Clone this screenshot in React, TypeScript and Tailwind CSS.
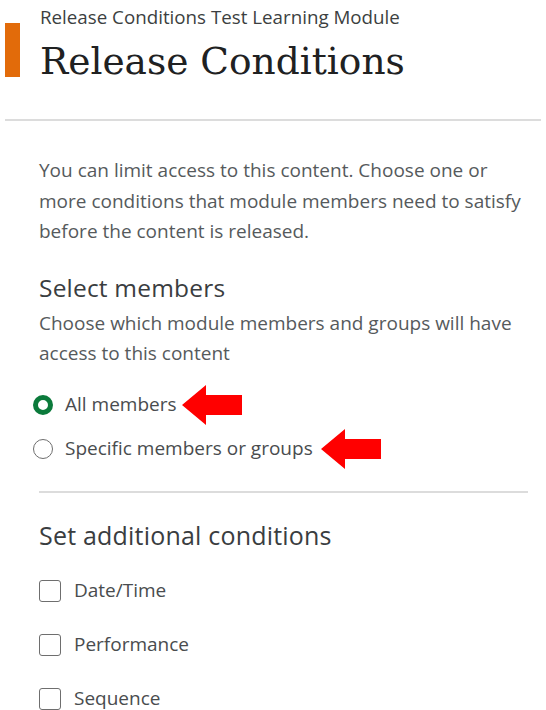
function Arrow() {
  return (
    <svg width="60" height="40" viewBox="0 0 60 40" className="shrink-0">
      <polygon points="0,20 24,0 24,10 60,10 60,30 24,30 24,40" fill="#ff0000" />
    </svg>
  );
}

function Checkbox({ label }: { label: string }) {
  return (
    <div className="flex items-center gap-[13px] h-[54px]">
      <span className="w-[22px] h-[22px] border-[1.5px] border-[#6e6e6e] rounded-[3px] bg-white" />
      <span>{label}</span>
    </div>
  );
}

export default function App() {
  return (
    <div
      className="w-[546px] h-[710px] bg-white overflow-hidden text-[#494c4e]"
      style={{ fontFamily: '"Open Sans", sans-serif' }}
    >
      <div className="flex pt-[5px]">
        <div className="w-[15px] h-[54px] bg-[#e26b0a] ml-[5px] mt-[18px]" />
        <div className="ml-[20px]">
          <div className="text-[18.75px] leading-[24px] text-[#3c3f41]">
            Release Conditions Test Learning Module
          </div>
          <h1
            className="text-[37.5px] leading-[48px] text-[#202122] mt-[8px]"
            style={{ fontFamily: '"DejaVu Serif", serif' }}
          >
            Release Conditions
          </h1>
        </div>
      </div>

      <div className="mx-[5px] mt-[34px] h-[2px] bg-[#dcdcdc]" />

      <div className="pl-[39px] pr-[16px] pt-[34px] text-[19px]">
        <p className="leading-[30.5px] text-[#565a5c]">
          You can limit access to this content. Choose one or more conditions
          that module members need to satisfy before the content is released.
        </p>

        <h2 className="mt-[27px] text-[24.5px] leading-[28px] text-[#3a3d3f] font-medium tracking-[0.2px]">
          Select members
        </h2>
        <p className="mt-[6px] leading-[30px] text-[#565a5c]">
          Choose which module members and groups will have access to this content
        </p>

        <div className="mt-[15px] -ml-[6px]">
          <div className="flex items-center h-[44px]">
            <span className="w-[20px] h-[20px] rounded-full border-[5px] border-[#0b7a3b] bg-white" />
            <span className="ml-[12px]">All members</span>
            <span className="ml-[5px]"><Arrow /></span>
          </div>
          <div className="flex items-center h-[44px]">
            <span className="w-[20px] h-[20px] rounded-full border-[1.5px] border-[#6e6e6e] bg-white" />
            <span className="ml-[12px]">Specific members or groups</span>
            <span className="ml-[8px]"><Arrow /></span>
          </div>
        </div>

        <div className="mt-[20px] mr-[2px] h-[2px] bg-[#dcdcdc]" />

        <h2 className="mt-[27px] text-[25px] leading-[30px] text-[#3a3d3f] font-medium tracking-[0.2px]">
          Set additional conditions
        </h2>

        <div className="mt-[14px]">
          <Checkbox label="Date/Time" />
          <Checkbox label="Performance" />
          <Checkbox label="Sequence" />
        </div>
      </div>
    </div>
  );
}
